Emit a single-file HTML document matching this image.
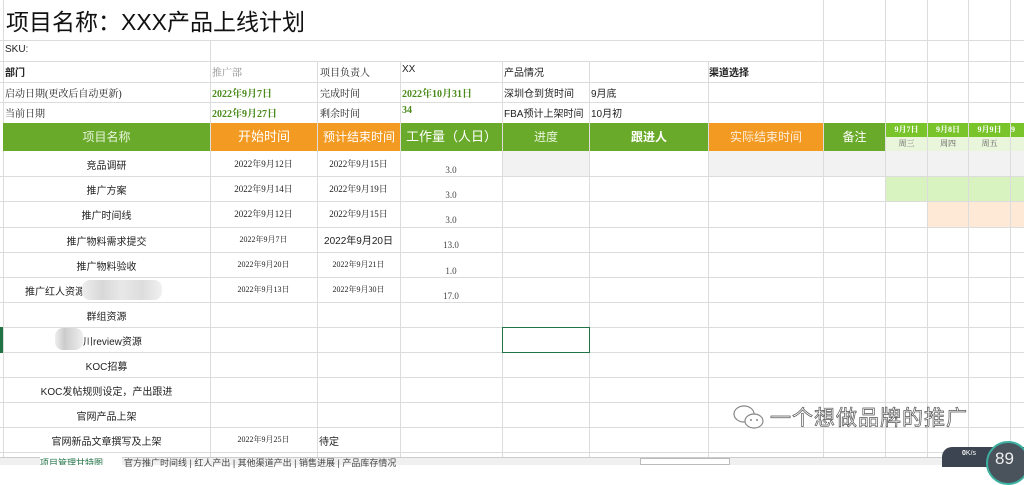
<!DOCTYPE html>
<html><head><meta charset="utf-8"><style>
body{margin:0;width:1024px;height:465px;overflow:hidden;background:#fff;font-family:"Liberation Sans","Noto Sans CJK SC",sans-serif;position:relative}
.c{position:absolute;box-sizing:border-box;font-size:11px;color:#222;white-space:nowrap;overflow:hidden}
.vl{position:absolute;top:0;width:1px;background:#dcdcdc}
.hl{position:absolute;left:0;height:1px;background:#dcdcdc}
.s{font-family:"Liberation Serif","Noto Serif CJK SC",serif}
</style></head><body>
<div class="c" style="left:502px;top:151px;width:87px;height:25px;background:#f2f2f2"></div>
<div class="c" style="left:708px;top:151px;width:316px;height:25px;background:#f2f2f2"></div>
<div class="c" style="left:885px;top:176px;width:139px;height:25px;background:#d8f2c0"></div>
<div class="c" style="left:927px;top:201px;width:97px;height:26px;background:#fde9d6"></div>
<div class="vl" style="left:3px;height:465px"></div>
<div class="vl" style="left:210px;top:40px;height:420px"></div>
<div class="vl" style="left:317px;top:61px;height:399px"></div>
<div class="vl" style="left:400px;top:61px;height:399px"></div>
<div class="vl" style="left:502px;top:61px;height:399px"></div>
<div class="vl" style="left:589px;top:61px;height:399px"></div>
<div class="vl" style="left:708px;top:61px;height:399px"></div>
<div class="vl" style="left:823px;height:460px"></div>
<div class="vl" style="left:885px;height:460px"></div>
<div class="vl" style="left:927px;height:460px"></div>
<div class="vl" style="left:968px;height:460px"></div>
<div class="vl" style="left:1010px;height:460px"></div>
<div class="hl" style="top:40px;width:1024px"></div>
<div class="hl" style="top:61px;width:1024px"></div>
<div class="hl" style="top:82px;width:1024px"></div>
<div class="hl" style="top:102px;width:1024px"></div>
<div class="hl" style="top:176px;width:1024px"></div>
<div class="hl" style="top:201px;width:1024px"></div>
<div class="hl" style="top:227px;width:1024px"></div>
<div class="hl" style="top:252px;width:1024px"></div>
<div class="hl" style="top:277px;width:1024px"></div>
<div class="hl" style="top:302px;width:1024px"></div>
<div class="hl" style="top:327px;width:1024px"></div>
<div class="hl" style="top:352px;width:1024px"></div>
<div class="hl" style="top:377px;width:1024px"></div>
<div class="hl" style="top:402px;width:1024px"></div>
<div class="hl" style="top:427px;width:1024px"></div>
<div class="hl" style="top:452px;width:1024px"></div>

<div class="c" style="left:6px;top:3px;font-size:23px;color:#111">项目名称：XXX产品上线计划</div>
<div class="c" style="left:5px;top:44px;font-size:10px">SKU:</div>
<div class="c" style="left:5px;top:64px;font-weight:bold;font-size:10px">部门</div>
<div class="c s" style="left:212px;top:64px;color:#888;font-size:10px">推广部</div>
<div class="c s" style="left:320px;top:64px;font-size:10px">项目负责人</div>
<div class="c" style="left:402px;top:64px;font-size:10px">XX</div>
<div class="c" style="left:504px;top:64px;font-size:10px">产品情况</div>
<div class="c" style="left:709px;top:64px;font-weight:bold;font-size:10px">渠道选择</div>
<div class="c s" style="left:5px;top:85px;font-size:10px">启动日期(更改后自动更新)</div>
<div class="c s" style="left:212px;top:85px;color:#4a8a1a;font-weight:bold;font-size:10px">2022年9月7日</div>
<div class="c s" style="left:320px;top:85px;font-size:10px">完成时间</div>
<div class="c s" style="left:402px;top:85px;color:#4a8a1a;font-weight:bold;font-size:10px">2022年10月31日</div>
<div class="c" style="left:504px;top:85px;font-size:10px">深圳仓到货时间</div>
<div class="c" style="left:591px;top:85px;font-size:10px">9月底</div>
<div class="c s" style="left:5px;top:105px;font-size:10px">当前日期</div>
<div class="c s" style="left:212px;top:105px;color:#4a8a1a;font-weight:bold;font-size:10px">2022年9月27日</div>
<div class="c s" style="left:320px;top:105px;font-size:10px">剩余时间</div>
<div class="c s" style="left:402px;top:105px;color:#4a8a1a;font-weight:bold;font-size:10px">34</div>
<div class="c" style="left:504px;top:105px;font-size:10px">FBA预计上架时间</div>
<div class="c" style="left:591px;top:105px;font-size:10px">10月初</div>

<div class="c" style="left:3px;top:123px;width:207px;height:28px;background:#6aaa2a;color:#e8f4dc;font-size:12px;text-align:center;line-height:28px">项目名称</div>
<div class="c" style="left:210px;top:123px;width:107px;height:28px;background:#f39a22;color:#fff;font-size:13px;text-align:center;line-height:28px;border-left:1px solid #ddd">开始时间</div>
<div class="c" style="left:317px;top:123px;width:83px;height:28px;background:#f39a22;color:#fff;font-size:12px;text-align:center;line-height:28px;border-left:1px solid #ddd">预计结束时间</div>
<div class="c" style="left:400px;top:123px;width:102px;height:28px;background:#6aaa2a;color:#fff;font-size:13px;text-align:center;line-height:28px;border-left:1px solid #ddd">工作量（人日）</div>
<div class="c" style="left:502px;top:123px;width:87px;height:28px;background:#6aaa2a;color:#e8f4dc;font-size:12px;text-align:center;line-height:28px;border-left:1px solid #ddd">进度</div>
<div class="c" style="left:589px;top:123px;width:119px;height:28px;background:#6aaa2a;color:#fff;font-size:12px;font-weight:bold;text-align:center;line-height:28px;border-left:1px solid #ddd">跟进人</div>
<div class="c" style="left:708px;top:123px;width:115px;height:28px;background:#f39a22;color:#fdeedd;font-size:12px;text-align:center;line-height:28px;border-left:1px solid #ddd">实际结束时间</div>
<div class="c" style="left:823px;top:123px;width:62px;height:28px;background:#6aaa2a;color:#fff;font-size:12px;text-align:center;line-height:28px;border-left:1px solid #ddd">备注</div>
<div class="c s" style="left:885px;top:123px;width:42px;height:14px;background:#78c42a;color:#fff;font-size:8px;font-weight:bold;text-align:center;line-height:14px;border-left:1px solid #ddd">9月7日</div>
<div class="c s" style="left:927px;top:123px;width:41px;height:14px;background:#78c42a;color:#fff;font-size:8px;font-weight:bold;text-align:center;line-height:14px;border-left:1px solid #ddd">9月8日</div>
<div class="c s" style="left:968px;top:123px;width:42px;height:14px;background:#78c42a;color:#fff;font-size:8px;font-weight:bold;text-align:center;line-height:14px;border-left:1px solid #ddd">9月9日</div>
<div class="c s" style="left:1010px;top:123px;width:14px;height:14px;background:#78c42a;color:#fff;font-size:8px;font-weight:bold;line-height:14px;border-left:1px solid #ddd">9</div>
<div class="c s" style="left:885px;top:137px;width:42px;height:14px;background:#eaf6dc;color:#555;font-size:8px;text-align:center;line-height:14px;border-left:1px solid #ddd">周三</div>
<div class="c s" style="left:927px;top:137px;width:41px;height:14px;background:#eaf6dc;color:#555;font-size:8px;text-align:center;line-height:14px;border-left:1px solid #ddd">周四</div>
<div class="c s" style="left:968px;top:137px;width:42px;height:14px;background:#eaf6dc;color:#555;font-size:8px;text-align:center;line-height:14px;border-left:1px solid #ddd">周五</div>
<div class="c" style="left:1010px;top:137px;width:14px;height:14px;background:#eaf6dc;border-left:1px solid #ddd"></div>

<div class="c" style="left:3px;top:157px;width:207px;text-align:center;font-size:10px">竞品调研</div>
<div class="c s" style="left:210px;top:157px;width:107px;text-align:center;font-size:9px">2022年9月12日</div>
<div class="c s" style="left:317px;top:157px;width:83px;text-align:center;font-size:9px">2022年9月15日</div>
<div class="c s" style="left:400px;top:165px;width:102px;text-align:center;font-size:9px;color:#444">3.0</div>

<div class="c" style="left:3px;top:182px;width:207px;text-align:center;font-size:10px">推广方案</div>
<div class="c s" style="left:210px;top:182px;width:107px;text-align:center;font-size:9px">2022年9月14日</div>
<div class="c s" style="left:317px;top:182px;width:83px;text-align:center;font-size:9px">2022年9月19日</div>
<div class="c s" style="left:400px;top:190px;width:102px;text-align:center;font-size:9px;color:#444">3.0</div>

<div class="c" style="left:3px;top:207px;width:207px;text-align:center;font-size:10px">推广时间线</div>
<div class="c s" style="left:210px;top:207px;width:107px;text-align:center;font-size:9px">2022年9月12日</div>
<div class="c s" style="left:317px;top:207px;width:83px;text-align:center;font-size:9px">2022年9月15日</div>
<div class="c s" style="left:400px;top:215px;width:102px;text-align:center;font-size:9px;color:#444">3.0</div>

<div class="c" style="left:3px;top:233px;width:207px;text-align:center;font-size:10px">推广物料需求提交</div>
<div class="c s" style="left:210px;top:234px;width:107px;text-align:center;font-size:8px">2022年9月7日</div>
<div class="c" style="left:317px;top:232px;width:83px;text-align:center;font-size:10px">2022年9月20日</div>
<div class="c s" style="left:400px;top:240px;width:102px;text-align:center;font-size:9px;color:#444">13.0</div>

<div class="c" style="left:3px;top:258px;width:207px;text-align:center;font-size:10px">推广物料验收</div>
<div class="c s" style="left:210px;top:259px;width:107px;text-align:center;font-size:8px">2022年9月20日</div>
<div class="c s" style="left:317px;top:259px;width:83px;text-align:center;font-size:8px">2022年9月21日</div>
<div class="c s" style="left:400px;top:266px;width:102px;text-align:center;font-size:9px;color:#444">1.0</div>

<div class="c" style="left:25px;top:283px;font-size:10px">推广红人资源第</div>
<div class="c" style="left:82px;top:280px;width:80px;height:20px;background:linear-gradient(90deg,#eee,#d8d8d8,#e8e8e8,#ddd,#f0f0f0);border-radius:8px"></div>
<div class="c s" style="left:210px;top:284px;width:107px;text-align:center;font-size:8px">2022年9月13日</div>
<div class="c s" style="left:317px;top:284px;width:83px;text-align:center;font-size:8px">2022年9月30日</div>
<div class="c s" style="left:400px;top:291px;width:102px;text-align:center;font-size:9px;color:#444">17.0</div>

<div class="c" style="left:3px;top:308px;width:207px;text-align:center;font-size:10px">群组资源</div>

<div class="c" style="left:55px;top:328px;width:28px;height:22px;background:linear-gradient(90deg,#eee,#ccc,#ddd,#eee);border-radius:8px"></div>
<div class="c" style="left:83px;top:333px;font-size:10px">川review资源</div>
<div class="c" style="left:502px;top:327px;width:88px;height:26px;border:1.5px solid #217346"></div>
<div class="c" style="left:0;top:327px;width:3px;height:26px;background:#217346"></div>

<div class="c" style="left:3px;top:358px;width:207px;text-align:center;font-size:10px">KOC招募</div>
<div class="c" style="left:3px;top:383px;width:207px;text-align:center;font-size:10px">KOC发帖规则设定，产出跟进</div>
<div class="c" style="left:3px;top:408px;width:207px;text-align:center;font-size:10px">官网产品上架</div>
<div class="c" style="left:3px;top:433px;width:207px;text-align:center;font-size:10px">官网新品文章撰写及上架</div>
<div class="c s" style="left:210px;top:434px;width:107px;text-align:center;font-size:8px">2022年9月25日</div>
<div class="c" style="left:319px;top:433px;font-size:10px">待定</div>

<svg style="position:absolute;left:732px;top:404px" width="34" height="28" viewBox="0 0 34 28"><g fill="none" stroke="#888" stroke-width="1.2"><ellipse cx="12" cy="10" rx="10" ry="8"/><ellipse cx="22" cy="17" rx="9" ry="7" fill="#fff"/></g><circle cx="19" cy="16" r="1" fill="#888"/><circle cx="25" cy="16" r="1" fill="#888"/></svg>
<div class="c" style="left:770px;top:402px;font-size:21px;color:#fff;-webkit-text-stroke:0.7px #555;letter-spacing:1px">一个想做品牌的推广</div>

<div class="c" style="left:0;top:457px;width:1024px;height:8px;background:#f0f0f0;border-top:1px solid #ccc"></div>
<div class="c" style="left:40px;top:457px;width:82px;height:8px;background:#fff;font-size:9px;color:#217346;line-height:12px;text-decoration:underline">项目管理甘特图</div>
<div class="c" style="left:124px;top:457px;font-size:9px;color:#444;line-height:12px">官方推广时间线 | 红人产出 | 其他渠道产出 | 销售进展 | 产品库存情况</div>
<div class="c" style="left:640px;top:458px;width:90px;height:7px;background:#fff;border:1px solid #bbb"></div>
<div class="c" style="left:942px;top:447px;width:82px;height:20px;background:#3b4450;border-radius:10px 0 0 0"></div>
<div class="c" style="left:962px;top:450px;font-size:7px;color:#fff;font-weight:bold">0<span style="font-weight:normal">K/s</span></div>
<div class="c" style="left:986px;top:441px;width:44px;height:44px;border-radius:50%;background:#4a525c;border:2px solid #3bb0a0;color:#eee;font-size:17px;padding:6px 0 0 7px">89</div>
</body></html>
